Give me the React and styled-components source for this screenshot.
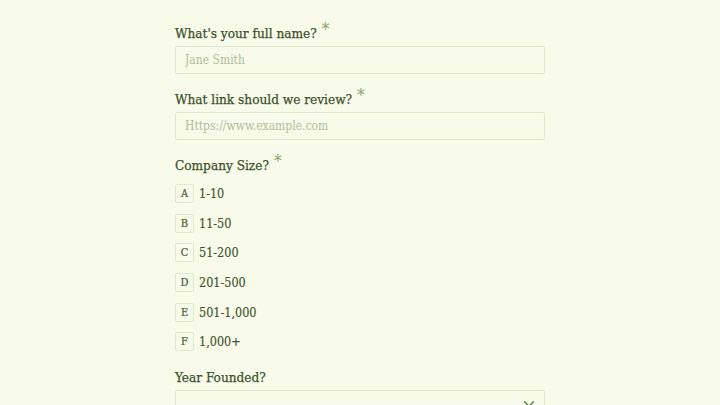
import styled, { createGlobalStyle } from 'styled-components'

const GlobalStyles = createGlobalStyle`
  html, body {
    margin: 0;
    padding: 0;
    background: #f8fbea;
  }
  body {
    font-family: "DejaVu Serif Condensed", "DejaVu Serif", "Liberation Serif", serif;
    color: #3d512c;
  }
`

const options = [
  { key: 'A', label: '1-10' },
  { key: 'B', label: '11-50' },
  { key: 'C', label: '51-200' },
  { key: 'D', label: '201-500' },
  { key: 'E', label: '501-1,000' },
  { key: 'F', label: '1,000+' },
]

function App() {
  return (
    <>
      <GlobalStyles />
      <Page>
        <Form>
          <Field>
            <Label>What's your full name?<Star>*</Star></Label>
            <TextInput placeholder="Jane Smith" />
          </Field>
          <Field>
            <Label>What link should we review?<Star>*</Star></Label>
            <TextInput placeholder="Https://www.example.com" />
          </Field>
          <Field>
            <Label>Company Size?<Star>*</Star></Label>
            <Choices>
              {options.map((o) => (
                <Choice key={o.key}>
                  <KeyBox>{o.key}</KeyBox>
                  <ChoiceText>{o.label}</ChoiceText>
                </Choice>
              ))}
            </Choices>
          </Field>
          <Field>
            <Label>Year Founded?</Label>
            <Select>
              <svg width="18" height="18" viewBox="0 0 24 24" fill="none" stroke="#5c7040" strokeWidth="1.8" strokeLinecap="round" strokeLinejoin="round">
                <path d="m6 9 6 6 6-6" />
              </svg>
            </Select>
          </Field>
        </Form>
      </Page>
    </>
  )
}

const Page = styled.div`
  height: 100vh;
  overflow: hidden;
  display: flex;
  justify-content: center;
`
const Form = styled.div`
  width: 370px;
  padding-top: 22px;
  display: flex;
  flex-direction: column;
  gap: 14px;
`
const Field = styled.div`
  display: flex;
  flex-direction: column;
`
const Label = styled.div`
  font-size: 13.5px;
  line-height: 20px;
  margin-bottom: 3px;
  color: #3d512c;
  -webkit-text-stroke: 0.25px #3d512c;
`
const Star = styled.span`
  color: #87a16b;
  -webkit-text-stroke: 0;
  font-size: 17px;
  margin-left: 5px;
  position: relative;
  top: -3px;
`
const TextInput = styled.input`
  box-sizing: border-box;
  width: 100%;
  height: 28px;
  padding: 0 9px;
  border: 1px solid #e2e8cc;
  border-radius: 2px;
  background: #f8fbea;
  font-family: inherit;
  font-size: 12px;
  color: #3d512c;
  outline: none;
  &::placeholder {
    color: #b1bd9c;
  }
`
const Choices = styled.div`
  display: flex;
  flex-direction: column;
  gap: 10.7px;
  padding: 6px 0 2px;
`
const Choice = styled.div`
  display: flex;
  align-items: center;
  gap: 5px;
`
const KeyBox = styled.div`
  box-sizing: border-box;
  width: 19px;
  height: 19px;
  border: 1px solid #e2e8cc;
  border-radius: 2px;
  display: flex;
  align-items: center;
  justify-content: center;
  font-size: 11px;
  color: #4a5a36;
  -webkit-text-stroke: 0.2px #4a5a36;
`
const ChoiceText = styled.span`
  font-size: 12.5px;
  color: #3d512c;
  -webkit-text-stroke: 0.15px #3d512c;
`
const Select = styled.div`
  box-sizing: border-box;
  height: 28px;
  border: 1px solid #e2e8cc;
  border-radius: 2px;
  display: flex;
  align-items: center;
  justify-content: flex-end;
  padding-right: 6px;
`

export default App
